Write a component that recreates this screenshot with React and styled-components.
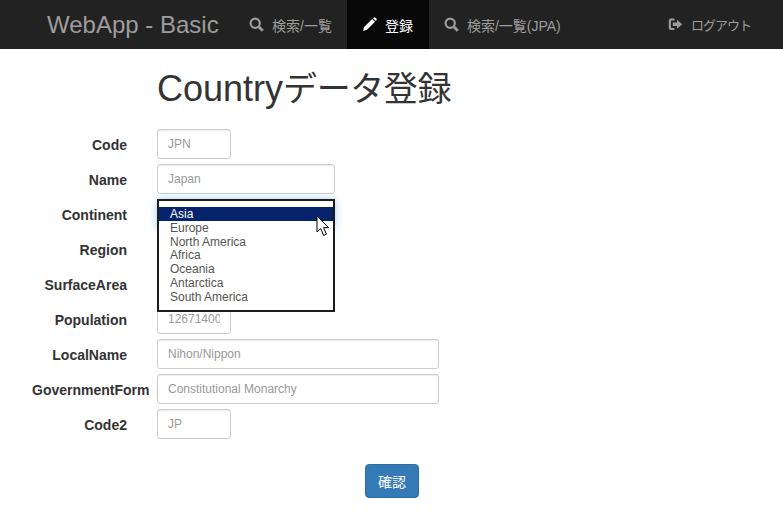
import React from "react";
import styled, { createGlobalStyle } from "styled-components";

const Global = createGlobalStyle`
  html, body { margin: 0; padding: 0; background: #fff; }
  body {
    font-family: "Liberation Sans", "Noto Sans CJK JP", sans-serif;
    font-size: 14px;
    color: #333;
  }
  * { box-sizing: border-box; }
`;

const Page = styled.div`
  width: 783px;
  height: 513px;
  overflow: hidden;
`;

const Navbar = styled.nav`
  height: 49px;
  background: #222;
  display: flex;
  align-items: stretch;
  padding-left: 47px;
`;

const Brand = styled.a`
  font-size: 24px;
  line-height: 49px;
  color: #9d9d9d;
  width: 187px;
  white-space: nowrap;
`;

const NavItem = styled.a`
  display: flex;
  align-items: center;
  gap: 8px;
  padding: 0 ${(p) => (p.$active ? "16px" : "15px")} 0 15px;
  font-size: 14px;
  color: ${(p) => (p.$active ? "#fff" : "#9d9d9d")};
  background: ${(p) => (p.$active ? "#080808" : "transparent")};
  white-space: nowrap;
  margin-left: ${(p) => (p.$push ? "auto" : "0")};
  margin-right: ${(p) => (p.$push ? "17px" : "0")};
`;

const Katakana = styled.span`
  font-size: 13px;
  letter-spacing: -1px;
`;

const Main = styled.main`
  display: flex;
  flex-direction: column;
`;

const Title = styled.h1`
  margin: 18px 0 18px 157px;
  font-size: 36px;
  line-height: 44px;
  font-weight: 400;
  color: #333;
`;

const TitleCjk = styled.span`
  font-size: 34px;
  letter-spacing: -0.4px;
`;

const Row = styled.div`
  display: flex;
  align-items: flex-start;
  height: 30px;
  margin-bottom: 5px;
  padding-left: 32px;
`;

const Label = styled.label`
  width: 95px;
  flex: none;
  margin-right: 30px;
  padding-top: 9px;
  font-size: 14px;
  line-height: 15px;
  font-weight: 700;
  color: #333;
  text-align: right;
  white-space: nowrap;
`;

const Field = styled.div`
  position: relative;
  width: ${(p) => p.$w}px;
  height: 30px;
`;

const Input = styled.input`
  display: block;
  width: 100%;
  height: 30px;
  padding: 0 10px;
  border: 1px solid #ccc;
  border-radius: 3px;
  background: #fff;
  font: 12px "Liberation Sans", sans-serif;
  color: #555;
  box-shadow: inset 0 1px 1px rgba(0, 0, 0, 0.075);
  &::placeholder { color: #999; opacity: 1; }
`;

const Select = styled.select`
  display: block;
  width: 100%;
  height: 30px;
  border: 1px solid #66afe9;
  border-radius: 3px;
  background: #fff;
  font: 12px "Liberation Sans", sans-serif;
  box-shadow: inset 0 1px 1px rgba(0, 0, 0, 0.075), 0 0 8px rgba(102, 175, 233, 0.6);
`;

const Dropdown = styled.ul`
  position: absolute;
  top: 0;
  left: 0;
  z-index: 5;
  width: 100%;
  height: 113px;
  margin: 0;
  padding: 6px 0 0;
  list-style: none;
  background: #fff;
  border: 2px solid #1c1c1c;
`;

const Option = styled.li`
  height: 13.8px;
  padding-left: 11px;
  font-size: 12px;
  line-height: 14px;
  color: ${(p) => (p.$selected ? "#fff" : "#555")};
  background: ${(p) => (p.$selected ? "#06246b" : "transparent")};
`;

const Cursor = styled.svg`
  position: absolute;
  left: 159px;
  top: 16px;
  z-index: 6;
  width: 15px;
  height: 22px;
`;

const ButtonRow = styled.div`
  padding: 20px 0 0 365px;
`;

const Button = styled.button`
  display: block;
  width: 54px;
  height: 34px;
  padding: 0;
  border: 1px solid #2e6da4;
  border-radius: 4px;
  background: #337ab7;
  color: #fff;
  font: 14px "Noto Sans CJK JP", sans-serif;
`;

const IconSvg = styled.svg`
  width: 15px;
  height: 15px;
  flex: none;
`;

const SearchIcon = () => (
  <IconSvg viewBox="0 0 15 15" fill="none" stroke="currentColor">
    <circle cx="6.2" cy="6.2" r="4.6" strokeWidth="2.2" />
    <path d="M9.8 9.8 L13.8 13.8" strokeWidth="2.8" />
  </IconSvg>
);

const PencilIcon = () => (
  <IconSvg viewBox="0 0 15 15" fill="currentColor">
    <path d="M1 14 L2.2 10 L10.2 2 L13 4.8 L5 12.8 Z" />
    <path d="M11 1.2 L12 .4 Q12.6 0 13.2 .5 L14.5 1.8 Q15 2.4 14.6 3 L13.8 4 Z" />
  </IconSvg>
);

const LogoutIcon = () => (
  <IconSvg viewBox="0 0 15 15" fill="currentColor">
    <path d="M6.5 1.5 H3 Q.8 1.5 .8 3.7 V10.8 Q.8 13 3 13 H6.5 V11 H3.8 Q2.9 11 2.9 10.1 V4.4 Q2.9 3.5 3.8 3.5 H6.5 Z" />
    <path d="M4.8 5.5 H9 V2.8 L14.2 7.3 L9 11.8 V9 H4.8 Z" />
  </IconSvg>
);

const continents = ["Asia", "Europe", "North America", "Africa", "Oceania", "Antarctica", "South America"];

const fields = [
  { label: "Code", w: 74, ph: "JPN" },
  { label: "Name", w: 178, ph: "Japan" },
  { label: "Continent", w: 178, select: true },
  { label: "Region", w: 178, ph: "Eastern Asia" },
  { label: "SurfaceArea", w: 74, ph: "377829" },
  { label: "Population", w: 74, ph: "126714000" },
  { label: "LocalName", w: 282, ph: "Nihon/Nippon" },
  { label: "GovernmentForm", w: 282, ph: "Constitutional Monarchy" },
  { label: "Code2", w: 74, ph: "JP" },
];

export default function App() {
  return (
    <Page>
      <Global />
      <Navbar>
        <Brand>WebApp - Basic</Brand>
        <NavItem><SearchIcon />検索/一覧</NavItem>
        <NavItem $active><PencilIcon />登録</NavItem>
        <NavItem><SearchIcon />検索/一覧(JPA)</NavItem>
        <NavItem $push><LogoutIcon /><Katakana>ログアウト</Katakana></NavItem>
      </Navbar>
      <Main>
        <Title>Country<TitleCjk>データ登録</TitleCjk></Title>
        {fields.map((f) => (
          <Row key={f.label}>
            <Label>{f.label}</Label>
            <Field $w={f.w}>
              {f.select ? (
                <>
                  <Select defaultValue="Asia">
                    {continents.map((c) => <option key={c}>{c}</option>)}
                  </Select>
                  <Dropdown>
                    {continents.map((c, i) => (
                      <Option key={c} $selected={i === 0}>{c}</Option>
                    ))}
                  </Dropdown>
                  <Cursor viewBox="0 0 15 22">
                    <path
                      d="M1 1 V17 L4.8 13.6 L7.6 20.4 L10.4 19.2 L7.6 12.6 L12.6 12.6 Z"
                      fill="#fff"
                      stroke="#000"
                      strokeWidth="1"
                    />
                  </Cursor>
                </>
              ) : (
                <Input placeholder={f.ph} />
              )}
            </Field>
          </Row>
        ))}
        <ButtonRow>
          <Button>確認</Button>
        </ButtonRow>
      </Main>
    </Page>
  );
}
